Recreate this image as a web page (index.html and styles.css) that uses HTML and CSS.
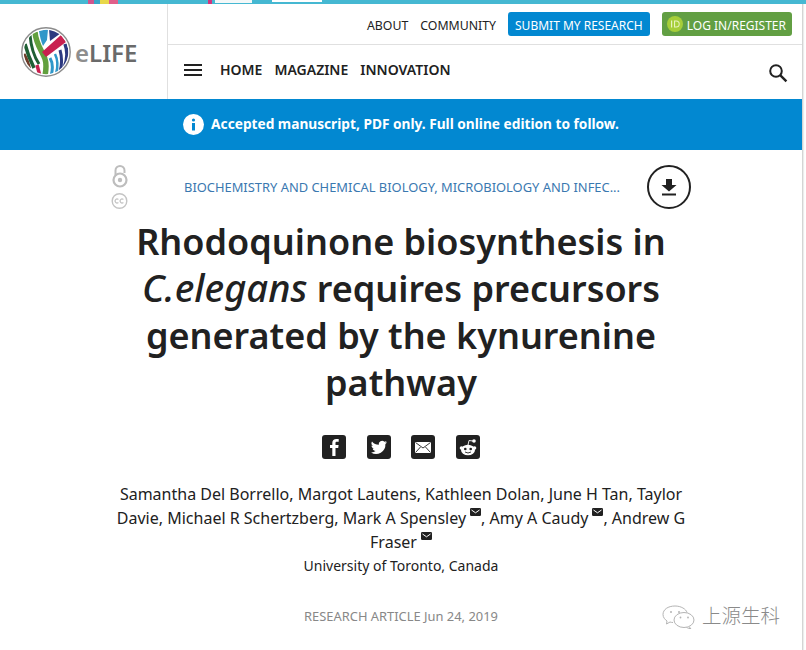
FILE: index.html
```html
<!DOCTYPE html>
<html lang="en">
<head>
    <meta charset="UTF-8">
    <title>Rhodoquinone biosynthesis in C.elegans</title>
    <link rel="stylesheet" href="styles.css">
</head>
<body>
<div class="page">
    <div class="top-strip">
        <span class="strip-bit strip-rainbow"></span>
        <span class="strip-bit strip-pink"></span>
        <span class="strip-bit strip-white-a"></span>
        <span class="strip-bit strip-white-b"></span>
    </div>

    <header class="site-header">
        <a class="logo">
            <svg class="logo-mark" width="50" height="50" viewBox="0 0 50 50">
                <defs><clipPath id="disc"><circle cx="25" cy="25" r="22.3"/></clipPath></defs>
                <circle cx="25" cy="25" r="24.2" fill="#fff" stroke="#8c8c8c" stroke-width="1.4"/>
                <g clip-path="url(#disc)" fill="none">
                    <path d="M3 27 C6 32 8 38 9 44" stroke="#6e3c2a" stroke-width="3"/>
                    <path d="M4 17 C6 25 8 31 13 41" stroke="#1f5f35" stroke-width="3.500"/>
                    <path d="M9 8 C10 20 12 28 18 37" stroke="#1f5f35" stroke-width="3"/>
                    <path d="M14 5 C15 18 22 25 24 32 C26 38 25 43 24 49" stroke="#62a03e" stroke-width="5.500"/>
                    <path d="M16 38 L19 49" stroke="#c9204f" stroke-width="3.500"/>
                    <path d="M18 4 L27 2 L26 13 L22 19 C20 14 19 10 18 4 Z" fill="#2f97c9"/>
                    <path d="M28 2 L40 6 L29 14 Z" fill="#2d3a80"/>
                    <path d="M21 25 L40 8 L45 15 L25 30 Z" fill="#c9204f"/>
                    <path d="M29 31 C32 36 32 42 30 49" stroke="#2f97c9" stroke-width="3"/>
                    <path d="M34 27 C37 33 37 40 35 47" stroke="#2f97c9" stroke-width="2.500"/>
                    <path d="M39 23 C41 30 41 38 39 45" stroke="#2d3a80" stroke-width="3"/>
                    <path d="M44 17 C47 25 46 34 43 41" stroke="#2d3a80" stroke-width="3.500"/>
                </g>
            </svg>
            <span class="logo-text"><span class="logo-e">e</span>LIFE</span>
        </a>
        <div class="header-main">
            <div class="header-top">
                <a class="top-link">ABOUT</a>
                <a class="top-link">COMMUNITY</a>
                <a class="btn btn-blue"><span>SUBMIT MY RESEARCH</span></a>
                <a class="btn btn-green">
                    <svg width="16" height="16" viewBox="0 0 16 16">
                        <circle cx="8" cy="8" r="8" fill="#a6ce39"/>
                        <rect x="4" y="4.5" width="1.2" height="7" fill="#e8f2c0"/>
                        <path d="M7 4.5h2.2a3.5 3.5 0 0 1 0 7H7z M8.1 5.5v5h1.1a2.5 2.5 0 0 0 0-5z" fill="#e8f2c0" fill-rule="evenodd"/>
                    </svg>
                    <span>LOG IN/REGISTER</span>
                </a>
            </div>
            <div class="header-nav">
                <span class="burger"><i></i><i></i><i></i></span>
                <a class="nav-link">HOME</a>
                <a class="nav-link">MAGAZINE</a>
                <a class="nav-link">INNOVATION</a>
                <svg class="search" width="20" height="20" viewBox="0 0 20 20">
                    <circle cx="8" cy="8" r="5.8" fill="none" stroke="#212121" stroke-width="2"/>
                    <path d="M12.2 12.2 L18.4 18.4" stroke="#212121" stroke-width="2.4"/>
                </svg>
            </div>
        </div>
    </header>

    <div class="banner">
        <svg width="21" height="21" viewBox="0 0 21 21">
            <circle cx="10.5" cy="10.5" r="10.5" fill="#fff"/>
            <circle cx="10.5" cy="6" r="1.6" fill="#0288d1"/>
            <rect x="9" y="9" width="3" height="7.5" fill="#0288d1"/>
        </svg>
        <span class="banner-text">Accepted manuscript, PDF only. Full online edition to follow.</span>
    </div>

    <main class="article">
        <div class="meta-row">
            <div class="licence">
                <svg width="16" height="23" viewBox="0 0 16 23">
                    <path d="M3.5 10 V5.5 a4.5 4.5 0 0 1 9 0 V8" fill="none" stroke="#bdbdbd" stroke-width="2"/>
                    <circle cx="8" cy="15" r="6.5" fill="none" stroke="#bdbdbd" stroke-width="2.2"/>
                    <circle cx="8" cy="15" r="2.2" fill="#bdbdbd"/>
                </svg>
                <svg width="17" height="16" viewBox="0 0 17 16">
                    <circle cx="8.5" cy="8" r="7.3" fill="none" stroke="#c4c4c4" stroke-width="1.4"/>
                    <path d="M7.4 6.5 a2 2 0 1 0 0 3 M12.4 6.5 a2 2 0 1 0 0 3" fill="none" stroke="#c4c4c4" stroke-width="1.3"/>
                </svg>
            </div>
            <div class="subjects">BIOCHEMISTRY AND CHEMICAL BIOLOGY, MICROBIOLOGY AND INFEC...</div>
            <a class="download">
                <svg width="18" height="18" viewBox="0 0 18 18">
                    <path d="M6 1h6v6h4.5L9 13.5 1.5 7H6z" fill="#212121"/>
                    <rect x="2" y="15.5" width="14" height="2" fill="#212121"/>
                </svg>
            </a>
        </div>

        <h1 class="title">Rhodoquinone biosynthesis in <em>C.elegans</em> requires precursors generated by the kynurenine pathway</h1>

        <div class="share">
            <a class="share-icon">
                <svg width="24" height="24" viewBox="0 0 24 24"><path d="M13.5 21v-8h2.7l.4-3h-3.1V8.2c0-.9.3-1.4 1.5-1.4h1.7V4.1c-.4 0-1.300-.1-2.400-.1-2.400 0-4 1.400-4 4V10H8v3h2.300v8z" fill="#fff"/></svg>
            </a>
            <a class="share-icon">
                <svg width="24" height="24" viewBox="0 0 24 24"><path d="M20 7.300c-.6.3-1.200.4-1.900.5.7-.4 1.200-1 1.400-1.800-.6.4-1.300.7-2.100.8a3.300 3.300 0 0 0-5.600 3A9.300 9.300 0 0 1 5 6.400a3.300 3.300 0 0 0 1 4.400c-.5 0-1-.2-1.500-.4 0 1.600 1.100 2.900 2.600 3.200-.5.100-1 .2-1.500.1.400 1.300 1.600 2.200 3 2.300A6.600 6.600 0 0 1 4 17.400 9.300 9.300 0 0 0 18.400 9.100c.6-.4 1.200-1 1.600-1.800z" fill="#fff"/></svg>
            </a>
            <a class="share-icon">
                <svg width="24" height="24" viewBox="0 0 24 24"><rect x="4" y="7" width="16" height="11" fill="#fff"/><path d="M4.500 7.500 L12 13 L19.500 7.500 M4.500 17.500 L9.500 12 M19.500 17.500 L14.500 12" fill="none" stroke="#212121" stroke-width=".9"/></svg>
            </a>
            <a class="share-icon">
                <svg width="24" height="24" viewBox="0 0 24 24">
                    <circle cx="5.500" cy="13" r="1.800" fill="#fff"/><circle cx="18.500" cy="13" r="1.800" fill="#fff"/>
                    <ellipse cx="12" cy="15" rx="7" ry="5.200" fill="#fff"/>
                    <circle cx="18" cy="6" r="1.800" fill="#fff"/>
                    <path d="M12 10 L13 5.500 L17 6" fill="none" stroke="#fff" stroke-width=".9"/>
                    <circle cx="9.300" cy="14" r="1.300" fill="#212121"/><circle cx="14.700" cy="14" r="1.300" fill="#212121"/>
                    <path d="M9 17 Q12 19 15 17" fill="none" stroke="#212121" stroke-width=".9"/>
                </svg>
            </a>
        </div>

        <p class="authors">Samantha Del Borrello, Margot Lautens, Kathleen Dolan, June H Tan, Taylor Davie, Michael R Schertzberg, Mark A Spensley<svg class="mail" width="11" height="8" viewBox="0 0 11 8"><rect width="11" height="8" rx="1.200" fill="#212121"/><path d="M1.500 2 L5.500 4.800 L9.500 2" fill="none" stroke="#fff" stroke-width="1"/></svg>, Amy A Caudy<svg class="mail" width="11" height="8" viewBox="0 0 11 8"><rect width="11" height="8" rx="1.200" fill="#212121"/><path d="M1.500 2 L5.500 4.800 L9.500 2" fill="none" stroke="#fff" stroke-width="1"/></svg>, Andrew G Fraser<svg class="mail" width="11" height="8" viewBox="0 0 11 8"><rect width="11" height="8" rx="1.200" fill="#212121"/><path d="M1.500 2 L5.500 4.800 L9.500 2" fill="none" stroke="#fff" stroke-width="1"/></svg></p>
        <p class="affiliation">University of Toronto, Canada</p>
        <p class="article-type">RESEARCH ARTICLE <span class="date">Jun 24, 2019</span></p>
    </main>

    <div class="watermark">
        <svg width="33" height="24" viewBox="0 0 33 24">
            <path d="M13 1 C6 1 1 4.500 1 9.500 C1 12.500 3 14.500 5 16 L4.500 19 L8 17 C9 17.300 10 17.500 11 17.500" fill="none" stroke="#b4b4b4" stroke-width="1"/>
            <path d="M13 1 C19 1 24 4 25 7.500" fill="none" stroke="#b4b4b4" stroke-width="1"/>
            <ellipse cx="22" cy="15" rx="10" ry="7.500" fill="#fff" stroke="#b4b4b4" stroke-width="1"/>
            <path d="M27 21.500 L29 24 L24.500 22.500" fill="#fff" stroke="#b4b4b4" stroke-width="1"/>
            <circle cx="9" cy="7" r="1" fill="#b4b4b4"/><circle cx="17" cy="7" r="1" fill="#b4b4b4"/>
            <circle cx="18.500" cy="12.500" r=".9" fill="#b4b4b4"/><circle cx="26" cy="12.500" r=".9" fill="#b4b4b4"/>
        </svg>
        <span class="watermark-text">上源生科</span>
    </div>
</div>
</body>
</html>
```

FILE: styles.css
```css
* {
    box-sizing: border-box;
}

html, body {
    margin: 0;
    padding: 0;
}

body {
    width: 806px;
    height: 650px;
    overflow: hidden;
    background: #fff;
    color: #212121;
    font-family: "Noto Sans", sans-serif;
}

a {
    color: inherit;
    text-decoration: none;
}

.page {
    position: relative;
    width: 803px;
    height: 650px;
    border-right: 1px solid #d4d4d4;
    box-shadow: 1px 0 1px #ececec;
}

/* strip of the page behind, cut off at the top */
.top-strip {
    width: 806px;
    height: 4px;
    background: #45b8d2;
    display: flex;
}

.strip-bit {
    display: block;
    height: 4px;
}

.strip-rainbow {
    width: 30px;
    margin-left: 88px;
    background: linear-gradient(90deg, #d0568e 0 20%, #38a6c8 20% 40%, #e8d84a 40% 70%, #e0608a 70% 100%);
}

.strip-pink {
    width: 4px;
    margin-left: 90px;
    background: #d0367e;
}

.strip-white-a {
    width: 37px;
    height: 3px;
    margin-left: 3px;
    background: #f4f8f8;
}

.strip-white-b {
    width: 50px;
    height: 2px;
    margin-left: 20px;
    background: #fff;
}

/* header */
.site-header {
    display: flex;
    height: 95px;
}

.logo {
    width: 168px;
    flex: none;
    border-right: 1px solid #e0e0e0;
    display: flex;
    align-items: center;
    padding-left: 21px;
    gap: 5px;
}

.logo-mark {
    flex: none;
}

.logo-text {
    font-size: 24px;
    font-weight: 600;
    color: #6a6a6a;
    margin-top: 2px;
    margin-left: -1px;
}

.logo-e {
    color: #8e8e8e;
}

.header-main {
    flex: 1;
}

.header-top {
    height: 41px;
    border-bottom: 1px solid #e0e0e0;
    display: flex;
    align-items: center;
    justify-content: flex-end;
    gap: 12px;
    padding-right: 10px;
    font-size: 12px;
}

.top-link {
    font-size: 12.300px;
    margin-top: 2px;
}

.btn {
    height: 24px;
    border-radius: 3px;
    color: #fff;
    display: flex;
    align-items: center;
    padding: 0 7px;
}

.btn span {
    margin-top: 2px;
}

.btn-blue {
    background: #0288d1;
}

.btn-green {
    background: #629f43;
    gap: 4px;
    padding: 0 6px 0 5px;
}

.header-nav {
    height: 54px;
    display: flex;
    align-items: center;
    gap: 12px;
    padding: 0 14px 6px 16px;
    font-size: 14px;
    font-weight: 600;
}

.burger {
    width: 18px;
    margin-right: 6px;
    display: flex;
    flex-direction: column;
    gap: 3px;
    margin-top: 1px;
}

.burger i {
    display: block;
    height: 2px;
    background: #212121;
}

.search {
    margin-left: auto;
    margin-top: 7px;
}

.banner {
    height: 51px;
    background: #0288d1;
    color: #fff;
    display: flex;
    align-items: center;
    justify-content: center;
    gap: 7px;
    font-size: 13.700px;
    font-weight: 700;
}

.banner-text {
    margin-top: -3px;
}

/* article head */
.article {
    padding-top: 15px;
}

.meta-row {
    display: flex;
    align-items: center;
    padding-left: 111px;
}

.licence {
    width: 17px;
    display: flex;
    flex-direction: column;
    align-items: center;
    gap: 5px;
    margin-right: 56px;
}

.subjects {
    width: 436px;
    font-size: 12.900px;
    color: #3a78b0;
    white-space: nowrap;
    margin-top: -1px;
}

.download {
    width: 44px;
    height: 44px;
    margin-left: 27px;
    border: 2px solid #212121;
    border-radius: 50%;
    display: flex;
    align-items: center;
    justify-content: center;
}

.title {
    width: 600px;
    height: 188px;
    margin: 9px auto 0;
    text-align: center;
    font-size: 36px;
    line-height: 47px;
    font-weight: 600;
}

.title em {
    font-size: 38px;
    font-weight: 500;
    line-height: 1;
}

.share {
    margin-top: 29px;
    display: flex;
    justify-content: center;
    gap: 20.500px;
}

.share-icon {
    width: 24px;
    height: 24px;
    border-radius: 3px;
    background: #212121;
    display: block;
}

.share-icon svg {
    display: block;
}

.authors {
    width: 580px;
    margin: 23px auto 0;
    text-align: center;
    font-size: 16px;
    line-height: 24px;
}

.mail {
    vertical-align: 8px;
    margin-left: 4px;
}

.affiliation {
    margin: 0;
    text-align: center;
    font-size: 14px;
    line-height: 24px;
}

.article-type {
    margin: 26px 0 0;
    text-align: center;
    font-size: 12.900px;
    line-height: 24px;
    color: #888;
}

/* watermark pasted over the screenshot */
.watermark {
    position: absolute;
    left: 662px;
    top: 604px;
    display: flex;
    align-items: center;
    gap: 7px;
    font-family: "Noto Sans CJK SC", sans-serif;
    font-size: 19.500px;
    font-weight: 300;
    color: #8a8a8a;
}

.watermark-text {
    margin-top: -4px;
}
```
